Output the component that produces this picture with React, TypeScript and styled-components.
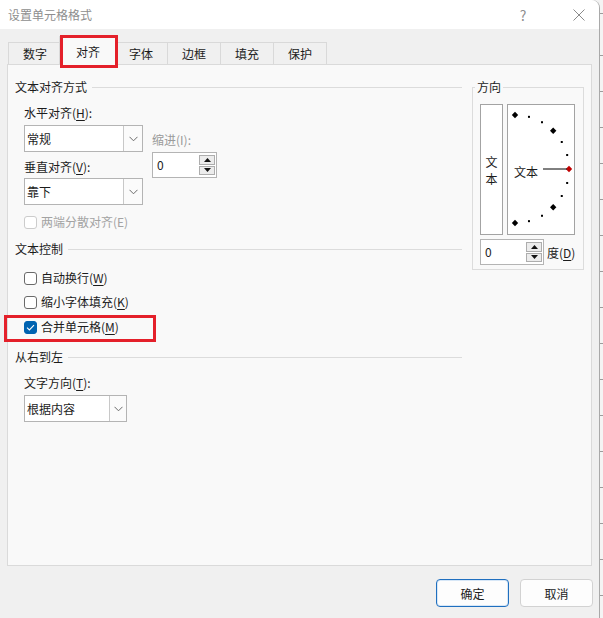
import React from 'react';
import styled, { createGlobalStyle } from 'styled-components';

const GlobalStyle = createGlobalStyle`
  html, body {
    margin: 0;
    padding: 0;
  }
  body {
    background: #f2f2f2;
    font-family: "Noto Sans CJK SC", "Microsoft YaHei", sans-serif;
    font-size: 12px;
    color: #1c1c1c;
  }
`;

const Screen = styled.div`
  width: 603px;
  height: 618px;
  display: flex;
  overflow: hidden;
`;

const BackStrip = styled.div`
  flex: 1;
  background: repeating-linear-gradient(
    to bottom,
    #f4f4f4 0,
    #f4f4f4 35px,
    #9c9c9c 35px,
    #9c9c9c 36px
  );
  background-position: 0 20px;
`;

const Dialog = styled.div`
  width: 599px;
  height: 618px;
  background: #f0f0f0;
  border-right: 1px solid #a9a9a9;
  border-radius: 0 8px 0 0;
  display: flex;
  flex-direction: column;
  flex-shrink: 0;
`;

const TitleBar = styled.div`
  height: 29px;
  background: #ffffff;
  border-radius: 0 8px 0 0;
  display: flex;
  align-items: center;
  padding-left: 8px;
  color: #8e8e8e;
`;

const Title = styled.div`
  flex: 1;
  line-height: 18px;
`;

const CaptionButton = styled.div<{ $w: number }>`
  width: ${p => p.$w}px;
  height: 29px;
  display: flex;
  align-items: center;
  justify-content: center;
  color: #8e8e8e;
  font-size: 14px;
`;

const CaptionGap = styled.div`
  width: 21px;
`;

const TabStrip = styled.div`
  height: 35px;
  display: flex;
  align-items: flex-end;
  padding-left: 8px;
`;

const Tab = styled.div<{ $active?: boolean }>`
  position: relative;
  height: ${p => (p.$active ? 26 : 21)}px;
  padding: 0 ${p => (p.$active ? 16 : 14)}px;
  margin-left: ${p => (p.$active ? -3 : -1)}px;
  margin-right: ${p => (p.$active ? -2 : 0)}px;
  margin-bottom: ${p => (p.$active ? -1 : 0)}px;
  z-index: ${p => (p.$active ? 2 : 0)};
  border: 1px solid #d9d9d9;
  border-bottom: none;
  background: ${p => (p.$active ? '#f9f9f9' : '#f0f0f0')};
  display: flex;
  align-items: center;
  line-height: 18px;
  padding-top: ${p => (p.$active ? 2 : 0)}px;

  &:first-child {
    margin-left: 0;
  }
`;

const RedMark = styled.span<{ $l: number; $t: number; $w: number; $h: number }>`
  position: absolute;
  left: ${p => p.$l}px;
  top: ${p => p.$t}px;
  width: ${p => p.$w}px;
  height: ${p => p.$h}px;
  border: 3px solid #e4202a;
  box-sizing: border-box;
  pointer-events: none;
`;

const Panel = styled.div`
  position: relative;
  z-index: 1;
  height: 502px;
  margin: 0 7px;
  box-sizing: border-box;
  border: 1px solid #dadada;
  background: #f9f9f9;
  padding: 13px 7px 0 7px;
  display: grid;
  grid-template-columns: 447px 112px;
  column-gap: 10px;
  align-items: start;
`;

const LeftCol = styled.div`
  display: flex;
  flex-direction: column;
`;

const GroupHeader = styled.div<{ $mt?: number }>`
  margin-top: ${p => p.$mt ?? 0}px;
  display: flex;
  align-items: center;
  gap: 5px;
  line-height: 18px;

  &::after {
    content: '';
    flex: 1;
    height: 1px;
    background: #dcdcdc;
  }
`;

const Indent = styled.div`
  padding-left: 9px;
  display: flex;
  flex-direction: column;
  align-items: flex-start;
`;

const AlignRow = styled.div`
  display: flex;
  gap: 9px;
`;

const Col = styled.div`
  display: flex;
  flex-direction: column;
`;

const Label = styled.div<{ $mt?: number; $muted?: boolean }>`
  margin-top: ${p => p.$mt ?? 0}px;
  line-height: 18px;
  color: ${p => (p.$muted ? '#9a9a9a' : '#1c1c1c')};
  white-space: nowrap;
`;

const U = styled.u`
  text-underline-offset: 2px;
`;

const ComboBox = styled.div<{ $w: number; $mt?: number }>`
  margin-top: ${p => p.$mt ?? 0}px;
  width: ${p => p.$w}px;
  height: 27px;
  box-sizing: border-box;
  border: 1px solid #b4b4b4;
  background: #ffffff;
  display: flex;
`;

const ComboText = styled.div`
  flex: 1;
  padding-left: 2px;
  display: flex;
  align-items: center;
`;

const ComboArrow = styled.div<{ $w: number }>`
  width: ${p => p.$w}px;
  border-left: 1px solid #c8c8c8;
  background: #fbfbfb;
  display: flex;
  align-items: center;
  justify-content: center;
`;

const SpinBox = styled.div<{ $w: number; $mt?: number }>`
  margin-top: ${p => p.$mt ?? 0}px;
  width: ${p => p.$w}px;
  height: 26px;
  flex-shrink: 0;
  box-sizing: border-box;
  border: 1px solid #b4b4b4;
  background: #ffffff;
  display: flex;
`;

const SpinValue = styled.div`
  flex: 1;
  padding: 3px 0 0 4px;
  line-height: 18px;
`;

const SpinButtons = styled.div`
  width: 16px;
  margin: 2px 1px 2px 0;
  display: flex;
  flex-direction: column;
  gap: 1px;
`;

const SpinButton = styled.div`
  flex: 1;
  border: 1px solid #adadad;
  background: #ececec;
  display: flex;
  align-items: center;
  justify-content: center;
`;

const CheckRow = styled.div<{ $mt?: number; $disabled?: boolean }>`
  position: relative;
  margin-top: ${p => p.$mt ?? 0}px;
  display: flex;
  align-items: center;
  gap: 4px;
  line-height: 18px;
  color: ${p => (p.$disabled ? '#a3a3a3' : '#1c1c1c')};
`;

const CheckBox = styled.span<{ $state: 'off' | 'on' | 'disabled' }>`
  width: 13px;
  height: 13px;
  box-sizing: border-box;
  border-radius: 3px;
  border: 1px solid
    ${p => (p.$state === 'on' ? '#0063b1' : p.$state === 'disabled' ? '#cccccc' : '#6a6a6a')};
  background: ${p => (p.$state === 'on' ? '#0063b1' : '#ffffff')};
  display: flex;
  align-items: center;
  justify-content: center;
`;

const DirGroup = styled.fieldset`
  margin: 0;
  padding: 8px 8px 4px 7px;
  border: 1px solid #dcdcdc;
  min-width: 0;
`;

const DirLegend = styled.legend`
  padding: 0 2px;
  margin-left: -5px;
  line-height: 18px;
`;

const DirBoxes = styled.div`
  display: flex;
  gap: 4px;
`;

const VerticalText = styled.div`
  width: 23px;
  height: 131px;
  box-sizing: border-box;
  border: 1px solid #a3a3a3;
  background: #ffffff;
  display: flex;
  flex-direction: column;
  align-items: center;
  justify-content: center;
  line-height: 17px;
`;

const DialBox = styled.div`
  width: 68px;
  height: 131px;
  box-sizing: border-box;
  border: 1px solid #a3a3a3;
  background: #ffffff;
`;

const DegreeRow = styled.div`
  margin-top: 4px;
  width: 110px;
  display: flex;
  align-items: center;
  gap: 3px;
  white-space: nowrap;
`;

const Footer = styled.div`
  display: flex;
  justify-content: flex-end;
  gap: 11px;
  padding: 13px 6px 0 0;
`;

const Button = styled.div<{ $primary?: boolean }>`
  width: 73px;
  height: 28px;
  box-sizing: border-box;
  border-radius: 4px;
  border: 1px solid ${p => (p.$primary ? '#1f6fbf' : '#d2d2d2')};
  box-shadow: ${p => (p.$primary ? 'inset 0 0 0 1px #d7e7f7' : 'none')};
  background: #fdfdfd;
  display: flex;
  align-items: center;
  justify-content: center;
`;

const Chevron = () => (
  <svg width="9" height="6" viewBox="0 0 9 6">
    <polyline points="0.5,0.8 4.5,4.8 8.5,0.8" fill="none" stroke="#6b6b6b" strokeWidth="1" />
  </svg>
);

const Combo = ({ w, arrow, mt, children }: { w: number; arrow: number; mt?: number; children: React.ReactNode }) => (
  <ComboBox $w={w} $mt={mt}>
    <ComboText>{children}</ComboText>
    <ComboArrow $w={arrow}>
      <Chevron />
    </ComboArrow>
  </ComboBox>
);

const Spinner = ({ w, mt }: { w: number; mt?: number }) => (
  <SpinBox $w={w} $mt={mt}>
    <SpinValue>0</SpinValue>
    <SpinButtons>
      <SpinButton>
        <svg width="7" height="4" viewBox="0 0 7 4">
          <polygon points="0,4 7,4 3.5,0" fill="#111" />
        </svg>
      </SpinButton>
      <SpinButton>
        <svg width="7" height="4" viewBox="0 0 7 4">
          <polygon points="0,0 7,0 3.5,4" fill="#111" />
        </svg>
      </SpinButton>
    </SpinButtons>
  </SpinBox>
);

const Check = ({
  state,
  mt,
  children,
  marked,
}: {
  state: 'off' | 'on' | 'disabled';
  mt?: number;
  children: React.ReactNode;
  marked?: boolean;
}) => (
  <CheckRow $mt={mt} $disabled={state === 'disabled'}>
    <CheckBox $state={state}>
      {state === 'on' && (
        <svg width="9" height="7" viewBox="0 0 9 7">
          <polyline points="1,3.6 3.4,6 8,1.2" fill="none" stroke="#ffffff" strokeWidth="1.1" />
        </svg>
      )}
    </CheckBox>
    <span>{children}</span>
    {marked && <RedMark $l={-20} $t={-3} $w={152} $h={27} />}
  </CheckRow>
);

// semicircle of marks, centre at the left edge of the dial
const Dial = () => {
  const cx = 7;
  const cy = 64;
  const r = 54;
  const marks = [];
  for (let a = 90; a >= -90; a -= 15) {
    const rad = (a * Math.PI) / 180;
    const x = cx + r * Math.cos(rad);
    const y = cy - r * Math.sin(rad);
    if (a % 45 === 0) {
      const s = 3.2;
      marks.push(
        <polygon
          key={a}
          points={`${x},${y - s} ${x + s},${y} ${x},${y + s} ${x - s},${y}`}
          fill={a === 0 ? '#c00000' : '#000000'}
        />
      );
    } else {
      marks.push(<rect key={a} x={x - 1} y={y - 1} width="2" height="2" fill="#000000" />);
    }
  }
  return (
    <svg width="66" height="129" viewBox="0 0 66 129">
      {marks}
      <line x1="35" y1="64" x2="59" y2="64" stroke="#000000" strokeWidth="1" />
      <text x="6" y="69" fontSize="12" fill="#1c1c1c" fontFamily='"Noto Sans CJK SC", sans-serif' dominantBaseline="middle">
        文本
      </text>
    </svg>
  );
};

const CloseIcon = () => (
  <svg width="12" height="12" viewBox="0 0 12 12">
    <path d="M0.5 0.5 L11.5 11.5 M11.5 0.5 L0.5 11.5" stroke="#8a8a8a" strokeWidth="1" fill="none" />
  </svg>
);

const tabs = ['数字', '对齐', '字体', '边框', '填充', '保护'];

const App = () => (
  <>
    <GlobalStyle />
    <Screen>
      <Dialog>
        <TitleBar>
          <Title>设置单元格格式</Title>
          <CaptionButton $w={30}>?</CaptionButton>
          <CaptionGap />
          <CaptionButton $w={40}>
            <CloseIcon />
          </CaptionButton>
        </TitleBar>

        <TabStrip>
          {tabs.map(t => (
            <Tab key={t} $active={t === '对齐'}>
              {t}
              {t === '对齐' && <RedMark $l={0} $t={-2} $w={58} $h={33} />}
            </Tab>
          ))}
        </TabStrip>

        <Panel>
          <LeftCol>
            <GroupHeader>文本对齐方式</GroupHeader>
            <Indent>
              <AlignRow>
                <Col>
                  <Label $mt={8}>
                    水平对齐(<U>H</U>):
                  </Label>
                  <Combo w={119} arrow={18} mt={3}>
                    常规
                  </Combo>
                  <Label $mt={6}>
                    垂直对齐(<U>V</U>):
                  </Label>
                  <Combo w={119} arrow={18} mt={2}>
                    靠下
                  </Combo>
                </Col>
                <Col>
                  <Label $mt={35} $muted>
                    缩进(I):
                  </Label>
                  <Spinner w={65} mt={3} />
                </Col>
              </AlignRow>
              <Check state="disabled" mt={8}>
                两端分散对齐(E)
              </Check>
            </Indent>

            <GroupHeader $mt={9}>文本控制</GroupHeader>
            <Indent>
              <Check state="off" mt={11}>
                自动换行(<U>W</U>)
              </Check>
              <Check state="off" mt={6}>
                缩小字体填充(<U>K</U>)
              </Check>
              <Check state="on" mt={7} marked>
                合并单元格(<U>M</U>)
              </Check>
            </Indent>

            <GroupHeader $mt={12}>从右到左</GroupHeader>
            <Indent>
              <Label $mt={8}>
                文字方向(<U>T</U>):
              </Label>
              <Combo w={103} arrow={16} mt={3}>
                根据内容
              </Combo>
            </Indent>
          </LeftCol>

          <DirGroup>
            <DirLegend>方向</DirLegend>
            <DirBoxes>
              <VerticalText>
                <span>文</span>
                <span>本</span>
              </VerticalText>
              <DialBox>
                <Dial />
              </DialBox>
            </DirBoxes>
            <DegreeRow>
              <Spinner w={64} />
              <span>
                度(<U>D</U>)
              </span>
            </DegreeRow>
          </DirGroup>
        </Panel>

        <Footer>
          <Button $primary>确定</Button>
          <Button>取消</Button>
        </Footer>
      </Dialog>
      <BackStrip />
    </Screen>
  </>
);

export default App;
